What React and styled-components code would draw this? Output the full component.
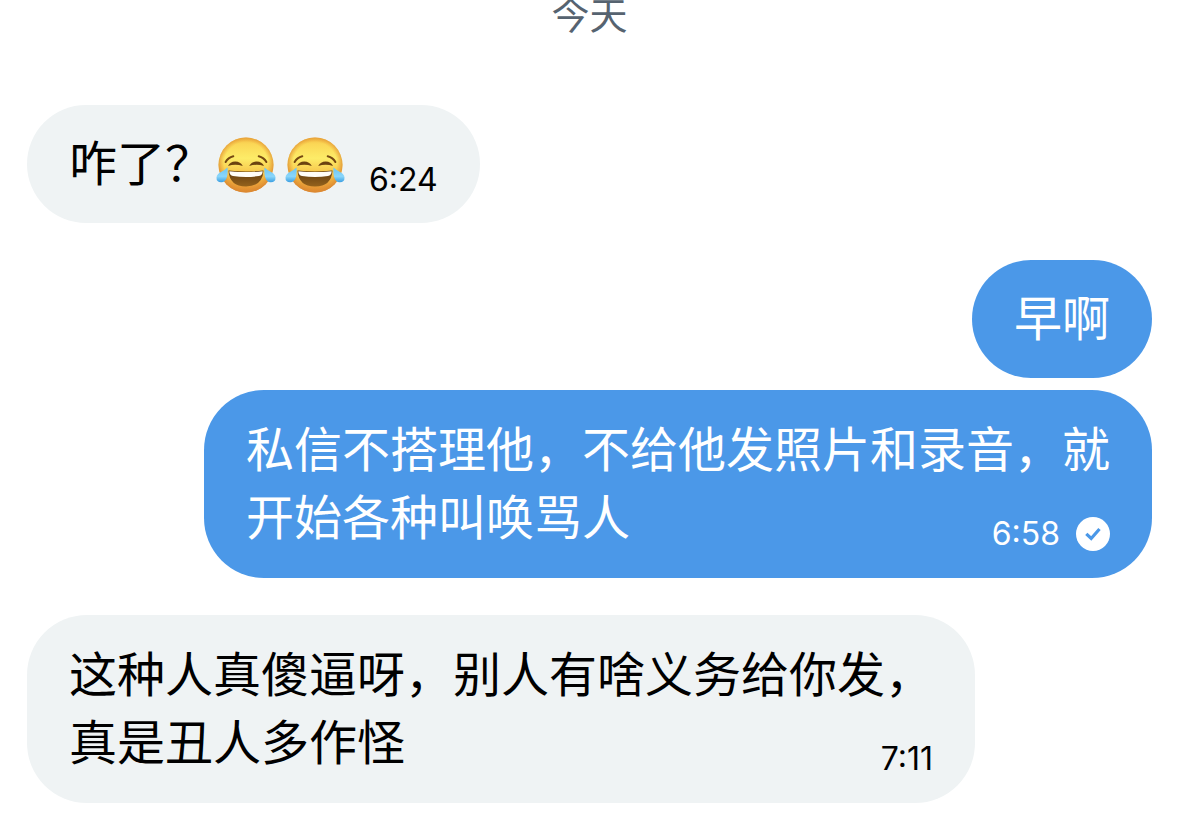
import styled, { createGlobalStyle } from "styled-components";

const messages = [
  { id: 1, side: "left", text: "咋了？", laughs: 2, time: "6:24" },
  { id: 2, side: "right", text: "早啊" },
  {
    id: 3,
    side: "right",
    text: "私信不搭理他，不给他发照片和录音，就开始各种叫唤骂人",
    time: "6:58",
    seen: true,
    long: true,
  },
  {
    id: 4,
    side: "left",
    text: "这种人真傻逼呀，别人有啥义务给你发，真是丑人多作怪",
    time: "7:11",
    long: true,
  },
];

function App() {
  return (
    <>
      <GlobalStyle />
      <EmojiColors />
      <Chat lang="zh-CN">
        <DayLabel>今天</DayLabel>
        <MessageList>
          {messages.map((message) => (
            <Message key={message.id} $side={message.side}>
              <Bubble $side={message.side} $long={message.long}>
                {message.text}
                {Array.from({ length: message.laughs || 0 }, (_, i) => (
                  <JoyEmoji key={i} />
                ))}
                {message.time && (
                  <Meta>
                    <time>{message.time}</time>
                    {message.seen && <SeenIcon />}
                  </Meta>
                )}
              </Bubble>
            </Message>
          ))}
        </MessageList>
      </Chat>
    </>
  );
}

function EmojiColors() {
  return (
    <Defs width="0" height="0" aria-hidden="true">
      <defs>
        <linearGradient id="face" x1="0" y1="0" x2="0" y2="1">
          <stop offset="0" stopColor="#f3bd45" />
          <stop offset="0.12" stopColor="#fbd756" />
          <stop offset="0.38" stopColor="#fdec68" />
          <stop offset="0.65" stopColor="#f6c44a" />
          <stop offset="1" stopColor="#e08a30" />
        </linearGradient>
        <radialGradient id="rim" cx="0.5" cy="0.48" r="0.52">
          <stop offset="0.76" stopColor="#e9962e" stopOpacity="0" />
          <stop offset="1" stopColor="#d98632" stopOpacity="0.9" />
        </radialGradient>
        <linearGradient id="mouth" x1="0" y1="0" x2="0" y2="1">
          <stop offset="0" stopColor="#5f3a10" />
          <stop offset="1" stopColor="#94621c" />
        </linearGradient>
        <linearGradient id="tear" x1="0" y1="0" x2="0" y2="1">
          <stop offset="0" stopColor="#6cc4f3" />
          <stop offset="0.6" stopColor="#8ad6fa" />
          <stop offset="1" stopColor="#3b9fe2" />
        </linearGradient>
      </defs>
    </Defs>
  );
}

function JoyEmoji() {
  return (
    <Emoji viewBox="0 2 60 60" role="img" aria-label="笑哭">
      <circle cx="30" cy="29" r="27.5" fill="url(#face)" />
      <circle cx="30" cy="29" r="27.5" fill="url(#rim)" />
      <g fill="none" stroke="#764812" strokeWidth="2" strokeLinecap="round">
        <path d="M9.6 26 Q12 21.500 17.300 20.200" />
        <path d="M50.400 26 Q48 21.500 42.700 20.200" />
      </g>
      <g fill="#6b4210">
        <path d="M12 30 Q14 25.500 19.300 25.500 Q24.500 25.500 26.800 30 Q19.300 27.500 12 30Z" />
        <path d="M33.200 30 Q35.500 25.500 40.700 25.500 Q46 25.500 48 30 Q40.700 27.500 33.200 30Z" />
      </g>
      <path
        d="M12.500 34.500 Q30 36.500 47.500 34.500 Q46.500 50.500 30 50.500 Q13.500 50.500 12.500 34.500Z"
        fill="url(#mouth)"
      />
      <path
        d="M13.300 35.200 Q30 37 46.700 35.200 Q46.500 39.500 43 40 Q30 42 17 40 Q13.500 39.500 13.300 35.200Z"
        fill="#fffdf8"
      />
      <path
        d="M11.500 31.500 Q12.500 46 5.500 46.300 Q0.300 46.500 0.500 41.500 Q0.800 38 5 36 Q9.500 33.500 11.500 31.500Z"
        fill="url(#tear)"
      />
      <path
        d="M48.500 31.500 Q47.500 46 54.500 46.300 Q59.700 46.500 59.500 41.500 Q59.200 38 55 36 Q50.500 33.500 48.500 31.500Z"
        fill="url(#tear)"
      />
    </Emoji>
  );
}

function SeenIcon() {
  return (
    <Seen viewBox="0 0 34 34" role="img" aria-label="已读">
      <circle cx="17" cy="17" r="17" fill="#fff" />
      <path
        d="M10.300 16.800 L15.200 21.500 L23.500 12"
        fill="none"
        stroke="#4b98e8"
        strokeWidth="3.200"
      />
    </Seen>
  );
}

const GlobalStyle = createGlobalStyle`
  body {
    margin: 0;
    background-color: #fff;
    font-family: Inter, "Noto Sans CJK SC", sans-serif;
  }
`;

const Chat = styled.main`
  padding: 0 27px;
`;

const DayLabel = styled.h2`
  margin: 0;
  height: 35px;
  display: flex;
  align-items: flex-end;
  justify-content: center;
  color: #566370;
  font-size: 38px;
  font-weight: 400;
  line-height: 40px;
`;

const MessageList = styled.ol`
  margin: 0;
  padding: 70px 0 18px;
  list-style: none;
`;

const Message = styled.li`
  display: flex;
  justify-content: ${({ $side }) =>
    $side === "right" ? "flex-end" : "flex-start"};

  & + & {
    margin-top: 37px;
  }

  /* messages from the same person sit closer together */
  &:nth-child(3) {
    margin-top: 12px;
  }
`;

const Bubble = styled.div`
  box-sizing: border-box;
  max-width: 948px;
  padding: ${({ $long }) => ($long ? "26px 42px" : "25px 42px")};
  border-radius: 60px;
  background-color: ${({ $side }) =>
    $side === "right" ? "#4b98e8" : "#eff3f4"};
  color: ${({ $side }) => ($side === "right" ? "#fff" : "#000")};
  font-size: 48px;
  line-height: 68px;
`;

/* floats so it shares the last line of the message */
const Meta = styled.span`
  float: right;
  display: flex;
  align-items: center;
  gap: 16px;
  margin: 32px 0 0 24px;
  font-size: 32px;
  line-height: 36px;
`;

const Emoji = styled.svg`
  width: 60px;
  height: 60px;
  margin-left: 3px;
  overflow: visible;
  vertical-align: middle;

  & + & {
    margin-left: 9px;
  }
`;

const Seen = styled.svg`
  width: 34px;
  height: 34px;
`;

const Defs = styled.svg`
  position: absolute;
`;

export default App;
